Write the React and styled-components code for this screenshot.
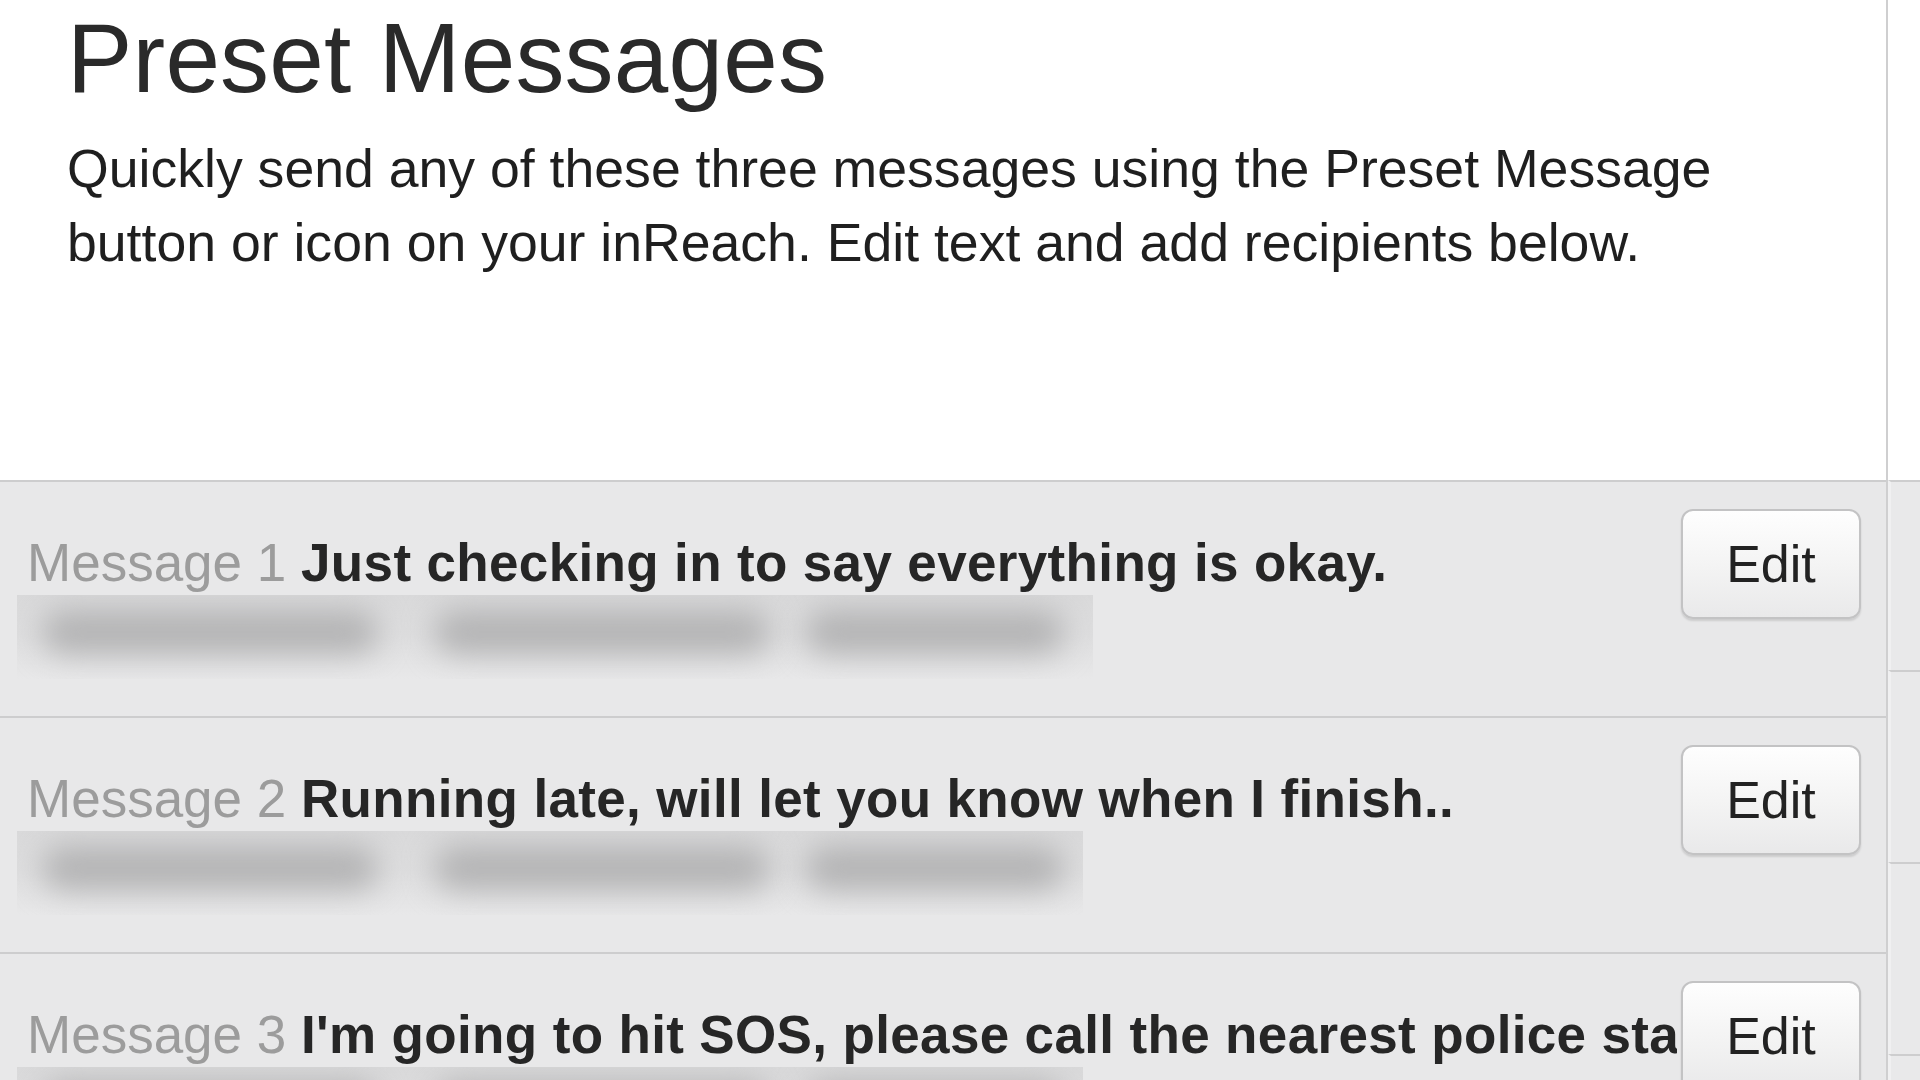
import React from "react";
import styled, { createGlobalStyle } from "styled-components";

const Global = createGlobalStyle`
  html, body {
    margin: 0;
    padding: 0;
    background: #ffffff;
    overflow: hidden;
  }
  body {
    font-family: "Liberation Sans", Arial, Helvetica, sans-serif;
  }
  * { box-sizing: border-box; }
`;

const Page = styled.div`
  display: flex;
  width: 1920px;
  height: 1080px;
  overflow: hidden;
  background: #ffffff;
`;

const Main = styled.main`
  flex: 0 0 1888px;
  width: 1888px;
  min-width: 0;
  display: flex;
  flex-direction: column;
  border-right: 2px solid #cfcfd0;
`;

const Header = styled.header`
  height: 480px;
  flex: 0 0 480px;
  padding: 2px 0 0 67px;
  background: #ffffff;
`;

const Title = styled.h1`
  margin: 0;
  font-size: 98px;
  line-height: 112px;
  font-weight: 400;
  color: #2a2a2a;
  letter-spacing: 0.2px;
`;

const Intro = styled.p`
  margin: 17px 0 0;
  max-width: 1720px;
  font-size: 53.6px;
  line-height: 74px;
  color: #1f1f1f;
`;

const Row = styled.section`
  flex: 0 0 236px;
  height: 236px;
  min-width: 0;
  display: flex;
  align-items: flex-start;
  gap: 4px;
  padding: 27px 25px 0 27px;
  background: #e8e8e9;
  border-top: 2px solid #cdcdce;
`;

const Body = styled.div`
  flex: 1 1 0;
  min-width: 0;
  padding-top: 22px;
`;

const Line = styled.div`
  height: 64px;
  line-height: 64px;
  font-size: 53px;
  white-space: nowrap;
  overflow: hidden;
`;

const Label = styled.span`
  color: #9c9c9c;
  font-weight: 400;
`;

const Text = styled.span`
  color: #262626;
  font-weight: 700;
  letter-spacing: 0.35px;
`;

const Recipients = styled.div`
  margin-left: -10px;
  width: ${(p) => p.$w}px;
  max-width: calc(100% + 10px);
  height: 84px;
  background: linear-gradient(#d9d9da, #dededf 50%, #e8e8e9);
  overflow: hidden;
  display: flex;
  align-items: center;
  padding: 0 0 10px 25px;
`;

const Blur = styled.div`
  flex: 0 0 auto;
  height: 44px;
  margin-left: ${(p) => p.$ml}px;
  width: ${(p) => p.$w}px;
  border-radius: 22px;
  background: #b3b3b4;
  filter: blur(15px);
`;

const EditButton = styled.button`
  flex: 0 0 180px;
  width: 180px;
  height: 110px;
  border: 2px solid #c3c3c4;
  border-radius: 12px;
  background: linear-gradient(#fefefe, #f3f3f3 55%, #e9e9ea);
  box-shadow: 0 2px 2px rgba(0, 0, 0, 0.12);
  font-family: "Liberation Sans", Arial, Helvetica, sans-serif;
  font-size: 52px;
  color: #222222;
  padding: 0;
  cursor: pointer;
`;

const Side = styled.aside`
  flex: 1 1 0;
  min-width: 0;
  display: flex;
  flex-direction: column;
`;

const SideTop = styled.div`
  flex: 0 0 480px;
  background: #ffffff;
`;

const SideRow = styled.div`
  flex: 0 0 ${(p) => p.$h}px;
  background: #e9e9ea;
  border-top: 2px solid #cdcdce;
  border-left: 3px solid #f0f0f1;
`;

const blobs = [
  { ml: 0, w: 336 },
  { ml: 56, w: 336 },
  { ml: 35, w: 259 },
];

const messages = [
  { n: 1, text: "Just checking in to say everything is okay.", rw: 1076 },
  { n: 2, text: "Running late, will let you know when I finish..", rw: 1066 },
  {
    n: 3,
    text: "I'm going to hit SOS, please call the nearest police station.",
    rw: 1066,
  },
];

export default function App() {
  return (
    <>
      <Global />
      <Page>
        <Main>
          <Header>
            <Title>Preset Messages</Title>
            <Intro>
              Quickly send any of these three messages using the Preset Message
              button or icon on your inReach. Edit text and add recipients below.
            </Intro>
          </Header>
          {messages.map((m) => (
            <Row key={m.n}>
              <Body>
                <Line>
                  <Label>Message {m.n}</Label> <Text>{m.text}</Text>
                </Line>
                <Recipients $w={m.rw}>
                  {blobs.map((b, i) => (
                    <Blur key={i} $ml={b.ml} $w={b.w} />
                  ))}
                </Recipients>
              </Body>
              <EditButton>Edit</EditButton>
            </Row>
          ))}
        </Main>
        <Side>
          <SideTop />
          <SideRow $h={190} />
          <SideRow $h={192} />
          <SideRow $h={192} />
          <SideRow $h={192} />
        </Side>
      </Page>
    </>
  );
}
